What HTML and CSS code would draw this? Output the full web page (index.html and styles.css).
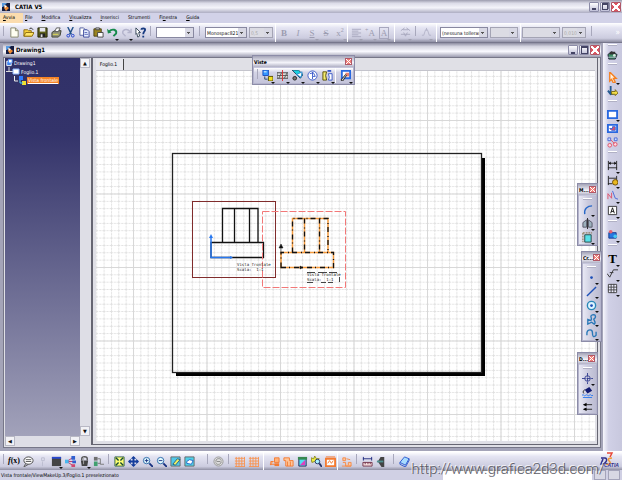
FILE: index.html
```html
<!DOCTYPE html>
<html lang="it">
<head>
<meta charset="utf-8">
<title>CATIA V5</title>
<link rel="stylesheet" href="styles.css">
</head>
<body>
<svg class="defs" aria-hidden="true">
  <symbol id="logo" viewBox="0 0 8 8"><path fill="#141c40" d="M0 0h8v8H0z"/><path fill="#5a9be0" d="M0 0h5L1 4H0z"/><path fill="#f08a30" d="M3 2l4 3-3 3-2-3z"/><path fill="#fff" d="M2 2l3 1-2 2z"/></symbol>
  <symbol id="grid" viewBox="0 0 12 12"><path stroke="#f79452" fill="none" d="M1 2.500h11M1 5.500h11M1 8.500h11M1 11.500h11M2.500 1v11M5.500 1v11M8.500 1v11M11.500 1v11"/></symbol>
</svg>

<header class="titlebar">
  <svg class="logo"><use href="#logo"/></svg>
  <h1>CATIA V5</h1>
  <div class="winbtns">
    <button class="min" aria-label="Riduci"></button><button class="restore" aria-label="Ripristina"></button><button class="close" aria-label="Chiudi"></button>
  </div>
</header>

<nav class="menubar">
  <a class="on" href="#"><u>A</u>vvia</a><a href="#"><u>F</u>ile</a><a href="#"><u>M</u>odifica</a><a href="#"><u>V</u>isualizza</a><a href="#"><u>I</u>nserisci</a><a href="#">Strumenti</a><a href="#">Fi<u>n</u>estra</a><a href="#"><u>G</u>uida</a>
</nav>

<div class="toolbar top">
  <i class="sep"></i>
  <button aria-label="Nuovo"><svg viewBox="0 0 12 12"><path d="M2 1h5l3 3v7H2z" fill="#fffff2" stroke="#85856a"/><path d="M7 1v3h3" fill="none" stroke="#85856a"/></svg></button>
  <button aria-label="Apri"><svg viewBox="0 0 12 12"><path d="M1 3h4l1 1h3v6H1z" fill="#f8d23c" stroke="#8a6a10"/><path d="M3 6h9l-2 4H1z" fill="#ffe566" stroke="#8a6a10"/><path d="M7 2l2-1 2 2" fill="none" stroke="#222"/></svg></button>
  <button aria-label="Salva"><svg viewBox="0 0 12 12"><path d="M1 1h10v10H1z" fill="#5e621c" stroke="#22240a"/><path d="M3 1h6v4H3z" fill="#e6e6f0"/><path d="M3 7h6v4H3z" fill="#222"/><path d="M4 8h2v3H4z" fill="#ddd"/></svg></button>
  <button aria-label="Stampa"><svg viewBox="0 0 12 12"><path d="M1 6l3-2h7l-1 5-2 2H1z" fill="#8f9178" stroke="#3c4030"/><path d="M4 5l2-4h4L8 5z" fill="#fff" stroke="#555"/><path d="M2 8h6" stroke="#e8df50"/></svg></button>
  <button aria-label="Taglia"><svg viewBox="0 0 12 12"><path d="M3 0l4 8M9 0L5 8" stroke="#205088" stroke-width="1.500"/><circle cx="3.500" cy="9.500" r="1.500" fill="none" stroke="#1d3fd0"/><circle cx="8.500" cy="9.500" r="1.500" fill="none" stroke="#1d3fd0"/></svg></button>
  <button aria-label="Copia"><svg viewBox="0 0 12 12"><path d="M1 1h4l2 2v6H1z" fill="#fff" stroke="#5560a0"/><path d="M5 3h4l2 2v6H5z" fill="#e8efff" stroke="#3a479a"/><path d="M6 6h3M6 8h4" stroke="#5a6ab8"/></svg></button>
  <button aria-label="Incolla"><svg viewBox="0 0 12 12"><path d="M1 2h8v8H1z" fill="#9a8420" stroke="#4d4210"/><path d="M3 1h4v2H3z" fill="#ddd" stroke="#444"/><path d="M5 6h6v5H5z" fill="#fff" stroke="#444"/></svg></button>
  <button class="drop" aria-label="Annulla"><svg viewBox="0 0 12 12"><path d="M2 5c4-4 9-2 8 2l-3 3" fill="none" stroke="#178a4c" stroke-width="2"/><path d="M0 2l1 5 4-1z" fill="#178a4c"/></svg></button>
  <button class="drop" aria-label="Ripeti"><svg viewBox="0 0 12 12"><path d="M10 5C6 1 1 3 2 7l3 3M11 2v4H7" fill="none" stroke="#b4b4cc" stroke-width="1.500"/></svg></button>
  <button aria-label="Guida rapida"><svg viewBox="0 0 12 12"><path d="M1 1l5 5H4l1 4-2 1-1-4-1 1z" fill="#fff" stroke="#345"/><path d="M7 3c0-2 4-2 4 0S9 5 9 8M9 9.500v2" fill="none" stroke="#173a80" stroke-width="2"/></svg></button>
  <i class="sep"></i>
  <select class="w38" aria-label="Stile"><option></option></select>
  <i class="sep"></i>
  <select class="w42" aria-label="Carattere"><option>Monospac821</option></select>
  <select class="w24" aria-label="Dimensione" disabled><option>0,5</option></select>
  <i class="line"></i>
  <button class="glyph" disabled><b>B</b></button>
  <button class="glyph" disabled><em>I</em></button>
  <button class="glyph drop" disabled><u>S</u></button>
  <button class="glyph" disabled><s>S</s></button>
  <button class="glyph drop" disabled>x<sup>2</sup></button>
  <i class="line"></i>
  <button class="drop" aria-label="Allinea" disabled><svg viewBox="0 0 12 12"><path d="M1 2.500h10M1 4.500h7M1 6.500h10M1 8.500h7M1 10.500h10" stroke="#a8a8be"/></svg></button>
  <button class="glyph drop" disabled><sup>+</sup>A</button>
  <button class="glyph drop" disabled><span class="box">A</span></button>
  <i class="line gap"></i>
  <button class="drop" aria-label="Simboli" disabled><svg viewBox="0 0 12 12"><path d="M1 4l4-3M7 1l4 3M1 8h10M4 6l2 4 2-4M3 3h6" fill="none" stroke="#a8a8be"/></svg></button>
  <i class="sep"></i>
  <button class="drop" aria-label="Inserisci simbolo" disabled><svg viewBox="0 0 12 12"><path d="M1 9h2l2-6h2l2 6h2M6 1v3" fill="none" stroke="#b4b4c8"/></svg></button>
  <i class="line gap"></i>
  <select class="w48" aria-label="Tolleranza"><option>(nessuna tolleranza)</option></select>
  <select class="w28" aria-label="Valore" disabled><option></option></select>
  <i class="line"></i>
  <select class="w38" aria-label="Formato" disabled><option></option></select>
  <select class="w24" aria-label="Precisione" disabled><option>0,010</option></select>
  <i class="sep"></i>
  <span class="more">»</span>
</div>

<main class="work">
  <section class="doc">
    <header class="doctitle">
      <svg class="logo"><use href="#logo"/></svg>
      <h2>Drawing1</h2>
      <div class="winbtns">
        <button class="min" aria-label="Riduci"></button><button class="max" aria-label="Ingrandisci"></button><button class="close" aria-label="Chiudi"></button>
      </div>
    </header>
    <div class="panes">
      <aside class="treepane">
        <div class="treerow">
          <ul class="tree">
            <li><svg viewBox="0 0 9 9"><path d="M2 3h5v5H2z" fill="#3c82f0" stroke="#fff"/><path d="M4 1h4v4H4z" fill="#fff" stroke="#4a90ff"/></svg>Drawing1</li>
            <li class="l1"><svg viewBox="0 0 14 9"><path d="M3 0v5M0 4.500h7" stroke="#ddd"/><path d="M7 2h6v5H7z" fill="#fff" stroke="#8fb6ff"/></svg>Foglio.1</li>
            <li class="l2"><svg viewBox="0 0 12 9"><path d="M.5 0v5H4" fill="none" stroke="#eee"/><path d="M5 0h4v4H5z" fill="#2f7cff"/><path d="M8 5h4v4H8z" fill="#f0e030"/><path d="M6 4v3h3" fill="none" stroke="#4ad0ff"/></svg><mark>Vista frontale</mark></li>
          </ul>
          <div class="vbar"><span>▲</span><span>▼</span></div>
        </div>
        <div class="hbar"><span>◀</span><span>▶</span></div>
      </aside>
      <section class="sheetpane">
        <div class="tabs"><button>Foglio.1</button></div>
        <svg class="canvas" role="img" aria-label="Foglio di disegno">
          <defs>
            <pattern id="minor" x="37" y="49" width="7.350" height="7.350" patternUnits="userSpaceOnUse"><path d="M.5 0v7.350M0 .5h7.350" stroke="#e0e0e0" stroke-dasharray="2 1"/></pattern>
            <pattern id="major" x="37" y="49" width="73.500" height="73.500" patternUnits="userSpaceOnUse"><path d="M.5 0v73.500M0 .5h73.500" stroke="#d8d8d8"/></pattern>
          </defs>
          <rect width="100%" height="100%" fill="#fff"/>
          <rect width="100%" height="100%" fill="url(#minor)"/>
          <rect width="100%" height="100%" fill="url(#major)"/>
          <path d="M385 87h4v218H80v-4h305z"/>
          <rect x="76.500" y="82.500" width="309" height="219" fill="none" stroke="#222" stroke-width="1.300"/>
          <g transform="translate(-96 -71)" fill="none">
            <rect x="192.500" y="201.500" width="83" height="76" stroke="#e04848"/>
            <rect x="192.500" y="201.500" width="83" height="76" stroke="#201010" stroke-dasharray="1 1"/>
            <g stroke="#111" stroke-width="1.300"><path d="M222.500 242.500V208.500H258v34M234.500 208.500v34M249.500 208.500v34M211 257.500v-15h52.500v15z"/></g>
            <path d="M211 236v21.500h21" stroke="#2878f0" stroke-width="1.500"/>
            <path d="M211 234l2 4h-4zM233 257.500l-3-1.500v3z" fill="#2878f0"/>
            <rect x="262.500" y="211.500" width="83" height="76" stroke="#f27878" stroke-dasharray="7 2"/>
            <g transform="translate(70 10)">
              <path stroke="#f59a3c" stroke-width="1.500" d="M222.500 242.500V208.500H258v34M234.500 208.500v34M249.500 208.500v34M211 257.500v-15h52.500v15z"/>
              <path stroke="#111" stroke-width="1.300" stroke-dasharray="5 4 1 3" d="M222.500 242.500V208.500H258v34M234.500 208.500v34M249.500 208.500v34M211 257.500v-15h52.500v15z"/>
              <path d="M211 234l2 4h-4zM233 257.500l-3-1.500v3zM211 236v7" fill="#111" stroke="#111" stroke-width=".500"/>
            </g>
            <path d="M307 272.500h8m3 0h9m2 0h8M307 282.500h6m8 0h5m2 0h5M339.500 277v5" stroke="#444"/>
            <g class="label" fill="#222"><text x="237" y="266">Vista frontale</text><text x="237" y="271" xml:space="preserve">Scala:  1:1</text><text x="307" y="276">Vista frontale</text><text x="307" y="281" xml:space="preserve">Scala:  1:1</text></g>
          </g>
        </svg>
      </section>
    </div>
  </section>

  <div class="side">
    <i></i>
    <button aria-label="Ambiente"><svg viewBox="0 0 12 12"><path d="M1 6l4-3 6 3-2 5H2z" fill="#3f8f68" stroke="#223"/><path d="M3 3h6v3H3z" fill="#333"/><circle cx="8" cy="7" r="1.500" fill="#d8e8e0"/><path d="M1 9h9" stroke="#b0b8c8"/></svg></button>
    <i></i>
    <button class="drop" aria-label="Seleziona"><svg viewBox="0 0 12 12"><path d="M3 0l7 7H7l2 4-2 1-2-4-2 2z" fill="#fff3e0" stroke="#f58020" stroke-width="1.500"/></svg></button>
    <button aria-label="Orienta"><svg viewBox="0 0 12 12"><path d="M4 0v9M1 5l3 4 4-1" fill="none" stroke="#245a90" stroke-width="2"/><path d="M5 6h4V4l3 3.500-3 3V9H5z" fill="#f4e04a" stroke="#776510"/></svg></button>
    <i></i>
    <button class="drop" aria-label="Nuovo foglio"><svg viewBox="0 0 12 12"><path d="M1 2h10v8H1z" fill="#fff" stroke="#2868e0" stroke-width="2"/></svg></button>
    <button aria-label="Dettaglio"><svg viewBox="0 0 12 12"><path d="M1 2h10v8H1z" fill="#fff" stroke="#2868e0" stroke-width="2"/><path d="M3 6h3V4h3v4H5z" fill="#e05068" stroke="#4060d0"/></svg></button>
    <button aria-label="Istanza"><svg viewBox="0 0 12 12"><g fill="#cfe0ff" stroke="#4868d8"><path d="M1 1h3v3H1zM8 1h3v3H8z"/></g><g fill="#ffd8dd" stroke="#e05068"><circle cx="3" cy="9" r="2"/><circle cx="9" cy="8" r="2"/><path d="M4 3l4 4"/></g></svg></button>
    <i></i>
    <div class="annot">
      <button class="drop" aria-label="Quote"><svg viewBox="0 0 12 12"><path d="M1.500 1v10M10.500 1v10M2 3.500h8M1 8.500h10" fill="none" stroke="#222"/><path d="M2 3.500l2-2v4zM10 3.500l-2-2v4z"/></svg></button>
      <button class="drop" aria-label="Quote concatenate"><svg viewBox="0 0 12 12"><path d="M1.500 1v10M10.500 1v6M2 3.500h8M1 9.500h5" fill="none" stroke="#222"/><circle cx="9" cy="8" r="3" fill="#e8b820" stroke="#6d4c00"/></svg></button>
      <button class="drop" aria-label="Tolleranze"><svg viewBox="0 0 12 12"><path d="M1 10V4l4 5V3" fill="none" stroke="#e05068"/><path d="M6 1l3 8 3 1" fill="none" stroke="#4868d8"/></svg></button>
      <button class="drop" aria-label="Riferimento"><svg viewBox="0 0 12 12"><path d="M1.500 1.500h9v9h-9z" fill="#fff" stroke="#333"/><path d="M4 9l2-6 2 6M4.500 7h3" fill="none" stroke="#111"/></svg></button>
      <i></i>
      <button class="drop" aria-label="Disegno"><svg viewBox="0 0 12 12"><path d="M2 4h8v6H2z" fill="#2878e0" stroke="#173c90"/><circle cx="4" cy="3" r="2" fill="#e86070"/><circle cx="9" cy="8" r="2" fill="#48c8f0"/></svg></button>
      <i></i>
      <button class="drop letter">T</button>
      <button class="drop" aria-label="Rugosità"><svg viewBox="0 0 12 12"><path d="M0 6l3 4 4-8h5M3 5h4" fill="none" stroke="#333"/></svg></button>
      <button class="drop" aria-label="Tabella"><svg viewBox="0 0 12 12"><path d="M1.500 1.500h9v9h-9zM4.500 1v10M7.500 1v10M1 4.500h10M1 7.500h10" fill="#eef" stroke="#444"/></svg></button>
    </div>
  </div>
</main>

<div class="toolbar bottom">
  <i class="sep"></i>
  <button class="fx"><span><em>f</em>(x)</span></button>
  <button aria-label="Commento"><svg viewBox="0 0 12 12"><ellipse cx="6" cy="5" rx="5" ry="4" fill="#fff" stroke="#444"/><path d="M3 8l-2 4 5-3M3 4h6M3 6h6" fill="none" stroke="#555"/></svg></button>
  <button aria-label="Verifica" disabled><svg viewBox="0 0 12 12"><path d="M5 2h3v3H5zM6 6v5" fill="none" stroke="#bbbccf"/></svg></button>
  <button class="drop" aria-label="Tabella"><svg viewBox="0 0 12 12"><path d="M1 1h10v10H1z" fill="#444"/><path d="M1 1h10v2H1z" fill="#2848d0"/></svg></button>
  <button aria-label="Relazioni"><svg viewBox="0 0 12 12"><path d="M2 6l6-4M2 6l6 4M2 6h8" stroke="#c03060"/><path d="M0 4h4v4H0z" fill="#48b8f0"/><path d="M7 0h4v4H7zM8 5h4v3H8z" fill="#3060d0"/><path d="M7 9h4v3H7z" fill="#d04870"/></svg></button>
  <button class="drop" aria-label="Blocca"><svg viewBox="0 0 12 12"><path d="M3 5V3c0-3 6-3 6 0v2" fill="none" stroke="#555" stroke-width="1.500"/><path d="M2 5h8l-1 6H3z" fill="#444"/><path d="M5 1v8" stroke="#aaa"/></svg></button>
  <button aria-label="Configura"><svg viewBox="0 0 12 12"><path d="M1 1h4v4H1z" fill="#707070"/><path d="M1 6h4v5H1z" fill="#40a070"/><path d="M5 3h3v6h4M5 8h3" fill="none" stroke="#777"/></svg></button>
  <i class="sep"></i>
  <button aria-label="Adatta"><svg viewBox="0 0 12 12"><path d="M1 1h10v10H1z" fill="#ffff70" stroke="#2f6048"/><path d="M2 2l3 3M10 2L7 5M2 10l3-3M10 10L7 7" stroke="#164a38" stroke-width="1.500"/></svg></button>
  <button aria-label="Sposta"><svg viewBox="0 0 12 12"><path d="M6 1v10M1 6h10" stroke="#153e9c" stroke-width="2"/><path d="M6 0l3 3H3zM6 12L3 9h6zM0 6l3-3v6zM12 6L9 3v6z" fill="#153e9c"/></svg></button>
  <button aria-label="Ingrandisci"><svg viewBox="0 0 12 12"><circle cx="5" cy="5" r="3.500" fill="#e4fbff" stroke="#2868a8"/><path d="M8 8l4 4" stroke="#173080" stroke-width="2"/><path d="M3 5h4M5 3v4" stroke="#173080"/></svg></button>
  <button aria-label="Riduci"><svg viewBox="0 0 12 12"><circle cx="5" cy="5" r="3.500" fill="#e4fbff" stroke="#2868a8"/><path d="M8 8l4 4" stroke="#173080" stroke-width="2"/><path d="M3 5h4" stroke="#173080"/></svg></button>
  <button aria-label="Vista normale"><svg viewBox="0 0 12 12"><path d="M1 1h10v10H1z" fill="#50c8e8" stroke="#666"/><path d="M3 9l5-6 3 1-5 6z" fill="#f0ee60" stroke="#1e608a"/></svg></button>
  <button aria-label="Vista multipla"><svg viewBox="0 0 12 12"><path d="M1 1h10v10H1z" fill="#50d0e8" stroke="#666"/><path d="M3 6l3-2 4 1-2 4-5-1z" fill="#fff" stroke="#2468c8"/></svg></button>
  <i class="sep wide"></i>
  <button aria-label="Aggiorna" disabled><svg viewBox="0 0 12 12"><circle cx="6" cy="6" r="5" fill="#ddd" stroke="#999"/><path d="M3 6c0-4 6-4 6-1M9 6c0 4-6 4-6 1M4 6h4" fill="none" stroke="#888"/></svg></button>
  <i class="sep"></i>
  <button aria-label="Griglia"><svg><use href="#grid"/></svg></button>
  <button aria-label="Aggancia al punto"><svg><use href="#grid"/></svg></button>
  <i class="line gap"></i>
  <button aria-label="Analisi"><svg viewBox="0 0 12 12"><path d="M1 9h10M2 10V6h3M6 2h5v5H6z" fill="#ffb27a" stroke="#f47a30"/><path d="M6 8h5v3H6z" fill="#f47a30"/></svg></button>
  <button aria-label="Vincoli"><svg viewBox="0 0 12 12"><path d="M1 2h6v3h4v6H3V5H1zM5 6v5M8 6v5" fill="#ffc79c" stroke="#f47a30"/></svg></button>
  <button aria-label="Colori"><svg viewBox="0 0 12 12"><path d="M2 2h8v9H2z" fill="#50e0f0" stroke="#225"/><path d="M3 10l6-6v6z" fill="#e040c0"/><path d="M1 1h10v3H1z" fill="#388850"/></svg></button>
  <button aria-label="Filtro"><svg viewBox="0 0 12 12"><path d="M0 2l3 1 1-3 2 3 3 0-3 2 0 3-2-2-3 1z" fill="#f4f040" stroke="#888820"/><circle cx="7" cy="6" r="2.500" fill="#a8f0ff" stroke="#236"/><path d="M9 8l3 4" stroke="#236" stroke-width="2"/></svg></button>
  <button aria-label="Cornice"><svg viewBox="0 0 12 12"><path d="M1 3h10v8H1z" fill="#fff" stroke="#f47a30" stroke-width="2"/><path d="M3 8l2-3 2 3 2-3M1 1h10" fill="none" stroke="#f47a30"/></svg></button>
  <i class="line"></i>
  <button aria-label="Geometria"><svg viewBox="0 0 12 12"><path d="M2 2h3v3H2zM6 3l4 1M2 7h3v4h6V7H8v3M1 11h10" fill="#ffc79c" stroke="#f48a48"/></svg></button>
  <i class="sep"></i>
  <button aria-label="Misura"><svg viewBox="0 0 12 12"><path d="M1.500 1v4M10.500 1v4M1 3h10" stroke="#222c80"/><path d="M1 7h10v4H1z" fill="#f6dede" stroke="#703048"/><path d="M3.500 7v2M6.500 7v2M9 7v2" stroke="#703048"/></svg></button>
  <button aria-label="Misura elemento"><svg viewBox="0 0 12 12"><path d="M2 6l3-5h4v11H6z" fill="#444"/><path d="M1 6h7" stroke="#509090" stroke-width="2"/></svg></button>
  <i class="sep gapped"></i>
  <button aria-label="Catalogo"><svg viewBox="0 0 12 12"><path d="M1 7l5-6 5 2-4 7z" fill="#a8dcff" stroke="#2858d0"/><path d="M1 7v2l6 3 4-7V3" fill="none" stroke="#2858d0"/></svg></button>
  <svg class="ds" viewBox="0 0 22 16" aria-label="CATIA"><path d="M8 1h5l-2 4" fill="none" stroke="#e84838" stroke-width="1.500"/><path d="M2 6h4c3 0 2 6-4 6l2-5" fill="none" stroke="#30308c" stroke-width="1.500"/><path d="M13 6c-6 0-3 3-2 4s-1 3-4 2" fill="none" stroke="#f09838" stroke-width="1.500"/><text x="5" y="15">CATIA</text></svg>
</div>

<footer class="status">
  <span>Vista frontale/ViewMakeUp.3/Foglio.1 preselezionato</span>
  <input type="text" aria-label="Comando">
  <button aria-label="Esegui"></button><button aria-label="Finestra comandi"></button>
</footer>

<section class="palette viste">
  <header><h3>Viste</h3><button class="close" aria-label="Chiudi"></button></header>
  <div class="tools">
    <i class="sep"></i>
    <button class="drop" aria-label="Vista frontale"><svg viewBox="0 0 12 12"><path d="M1 0h6v6H1z" fill="#3498ff" stroke="#174bc0"/><path d="M2 2h3" stroke="#fff"/><path d="M7 7h5v5H7z" fill="#f0e020" stroke="#554c00"/><path d="M3 7v3h3" fill="none" stroke="#246"/></svg></button>
    <button class="drop" aria-label="Sezione"><svg viewBox="0 0 12 12"><path d="M0 3h12v6H0z" fill="#ddd" stroke="#444"/><path d="M2 9l3-6M8 9l3-6M0 6h12" stroke="#555"/><path d="M6 0v12" stroke="#e03030"/></svg></button>
    <button class="drop" aria-label="Dettaglio"><svg viewBox="0 0 12 12"><path d="M0 0h7l5 5-3 4-4-4z" fill="#18d0e0" stroke="#246"/><path d="M5 5l6-3-1 6z" fill="#fff" stroke="#28c"/><circle cx="3" cy="9" r="2" fill="#777" stroke="#222"/></svg></button>
    <button class="drop" aria-label="Ritaglio"><svg viewBox="0 0 12 12"><circle cx="6" cy="6" r="5" fill="#fff" stroke="#3858c8"/><path d="M3 4l4-1 2 4H6v3M6 2v5" fill="none" stroke="#3858c8"/></svg></button>
    <button class="drop" aria-label="Interruzione"><svg viewBox="0 0 12 12"><path d="M1 2h4l-1 4 1 5H1z" fill="#f4ec70" stroke="#554c00"/><path d="M7 4h4v7H7l1-3z" fill="#fff" stroke="#3858c8"/><path d="M6 1h4" stroke="#3858c8" stroke-width="2"/></svg></button>
    <i class="line"></i>
    <button class="drop" aria-label="Assistente"><svg viewBox="0 0 12 12"><path d="M2 1h9v8H2z" fill="#fff" stroke="#2868e0" stroke-width="2"/><path d="M6 3h4v4H6z" fill="#e88070"/><path d="M1 11l5-6 1 1-4 6z" fill="#ccc" stroke="#222"/></svg></button>
  </div>
</section>

<section class="palette tall modifica">
  <header><h3>M...</h3><button class="close" aria-label="Chiudi"></button></header>
  <div class="tools">
    <i class="hsep"></i>
    <button class="drop" aria-label="Raccordo"><svg viewBox="0 0 12 12"><path d="M3 11C2 5 6 2 11 2" fill="none" stroke="#2868c8" stroke-width="1.500"/></svg></button>
    <button class="drop" aria-label="Simmetria"><svg viewBox="0 0 12 12"><path d="M6 0v12" stroke="#222"/><path d="M5 2L1 5v5h4zM7 2l4 3v5H7z" fill="#9cb0bc" stroke="#556"/></svg></button>
    <button class="drop" aria-label="Vincolo"><svg viewBox="0 0 12 12"><path d="M3 3h7v8H3z" fill="#58e0e8" stroke="#244"/><path d="M1 1h10M1 1v10" stroke="#7a6030" stroke-dasharray="2 1"/></svg></button>
  </div>
</section>

<section class="palette tall crea">
  <header><h3>Cr...</h3><button class="close" aria-label="Chiudi"></button></header>
  <div class="tools">
    <i class="hsep"></i>
    <button class="drop" aria-label="Punto"><svg viewBox="0 0 12 12"><circle cx="6" cy="6" r="1.500" fill="#1d50b8"/></svg></button>
    <button class="drop" aria-label="Linea"><svg viewBox="0 0 12 12"><path d="M1 11L11 1" stroke="#1d50b8" stroke-width="1.500"/></svg></button>
    <button class="drop" aria-label="Cerchio"><svg viewBox="0 0 12 12"><circle cx="6" cy="6" r="4.500" fill="#dff4ff" stroke="#2a88b8" stroke-width="1.500"/><circle cx="6" cy="6" r="1.500" fill="#1d50b8"/></svg></button>
    <button class="drop" aria-label="Profilo"><svg viewBox="0 0 12 12"><path d="M2 11V6l3 1c3-1-2-5 2-6s4 3 2 4 3 4 0 6L6 9z" fill="none" stroke="#2a78b8" stroke-width="1.500"/></svg></button>
    <button class="drop" aria-label="Curva"><svg viewBox="0 0 12 12"><path d="M1 8V5c1-4 6-4 6 0s1 6 4 3V4" fill="none" stroke="#2a78b8" stroke-width="1.500"/></svg></button>
  </div>
</section>

<section class="palette tall decora">
  <header><h3>D...</h3><button class="close" aria-label="Chiudi"></button></header>
  <div class="tools">
    <i class="hsep"></i>
    <button class="drop" aria-label="Asse"><svg viewBox="0 0 12 12"><circle cx="6" cy="6" r="3" fill="none" stroke="#333e90"/><path d="M6 0v12M0 6h12" stroke="#333e90" stroke-dasharray="4 1"/></svg></button>
    <button aria-label="Riempimento"><svg viewBox="0 0 12 12"><path d="M3 3l5-3 3 4-5 3z" fill="#111a70"/><path d="M3 3c-2 1-2 3-1 4" fill="none" stroke="#111"/><path d="M0 9c2-2 2 2 4 0s2 2 4 0 2 2 4 0M1 11.500h10" fill="none" stroke="#2878f0"/></svg></button>
    <button aria-label="Freccia"><svg viewBox="0 0 12 12"><path d="M2 4h9M2 9h9" stroke="#222"/><path d="M1 4l4-2v4zM1 9l4-2v4z"/></svg></button>
  </div>
</section>

<div class="watermark">http://www.grafica2d3d.com/</div>
</body>
</html>
```

FILE: styles.css
```css
* { box-sizing: border-box; }
html, body { height: 100%; }
body {
  margin: 0;
  display: flex;
  flex-direction: column;
  position: relative;
  overflow: hidden;
  background: #cfcfe4;
  color: #000;
  font: 5px/8px "DejaVu Sans Condensed", "DejaVu Sans", sans-serif;
}
h1, h2, h3 { margin: 0; font-weight: bold; font-size: 6px; line-height: 10px; }
button {
  padding: 0;
  border: 0;
  background: none;
  font: inherit;
  color: inherit;
  display: grid;
  place-items: center;
  flex: none;
}
svg { display: block; flex: none; }
.defs { position: absolute; width: 0; height: 0; }
.logo { width: 8px; height: 8px; }

/* Window frames */
.titlebar, .doctitle {
  display: flex;
  align-items: center;
  flex: none;
}
.titlebar {
  height: 13px;
  gap: 5px;
  padding: 0 1px 0 2px;
  background: linear-gradient(#9c9cae, #dcdce8 25%, #f4f4fa 60%, #b4b4c8 95%);
}
.doctitle {
  height: 14px;
  gap: 2px;
  padding: 0 1px 0 3px;
  background: linear-gradient(#8c8ca0, #d4d4e0 25%, #fafaff 60%, #9c9cb0);
}
.winbtns { display: flex; gap: 1px; margin-left: auto; }
.winbtns button {
  position: relative;
  width: 10px;
  height: 10px;
  border: 1px solid #8c8ca8;
  border-radius: 1px;
  background: linear-gradient(#fff, #c0c0d8);
}
.winbtns .min::after, .winbtns .max::after, .winbtns .restore::after {
  content: "";
  width: 5px;
  height: 5px;
  border: solid #444464;
  border-width: 2px 1px 1px;
}
.winbtns .min::after { border-width: 0 0 2px; width: 4px; }
.winbtns .restore::after { width: 4px; height: 4px; box-shadow: 1px -1px #777792; }
.winbtns .close, .palette .close {
  border: 1px solid #b05868;
  background: linear-gradient(45deg, transparent 43%, #fff 43% 57%, transparent 57%), linear-gradient(-45deg, transparent 43%, #fff 43% 57%, transparent 57%), #dc5560;
}

/* Menus */
.menubar {
  display: flex;
  flex: none;
  gap: 9px;
  height: 10px;
  background: #d2d2e8;
  line-height: 9px;
}
.menubar a { color: inherit; text-decoration: none; }
.menubar a.on { background: #fbdcae; width: 23px; padding-left: 3px; margin-right: -7px; }

/* Toolbars */
.toolbar {
  display: flex;
  align-items: center;
  flex: none;
  background: linear-gradient(#fff, #e4e4f2 25%, #ccccdf 80%, #9090a4);
}
.toolbar.top { height: 19px; }
.toolbar.bottom { height: 19px; border-top: 1px solid #fff; }
.toolbar button { width: 14px; height: 14px; }
.toolbar svg, .tools svg, .side svg { width: 11px; height: 11px; }
.drop { position: relative; }
.drop::after {
  content: "";
  position: absolute;
  right: 0;
  bottom: -1px;
  border: 2px solid transparent;
  border-top-color: #111;
  border-bottom: 0;
}
.drop:disabled::after { border-top-color: #a0a0b0; }
.sep {
  width: 4px;
  height: 10px;
  margin: 0 3px 4px 0;
  border-right: 1px solid #a8a8bc;
  flex: none;
}
.bottom .wide { margin-left: 8px; }
.bottom .gapped { margin-left: 2px; }
.line {
  align-self: stretch;
  width: 1px;
  margin-right: 1px;
  background: #fff;
  flex: none;
}
.toolbar .gap { margin: 0 3px; }
.glyph { font: 9px/10px "Liberation Serif", serif; color: #9c9cb0; }
.toolbar .glyph { display: block; text-align: center; }
.glyph sup { font-size: 6px; line-height: 0; }
.box { border: 1px solid #a8a8be; padding: 0 1px; }
.fx { font: bold 8px/10px "Liberation Serif", serif; white-space: nowrap; }
.toolbar select {
  appearance: none;
  height: 11px;
  margin: 0 2px 0 0;
  padding: 0 8px 0 1px;
  border: 1px solid #8888a0;
  border-radius: 0;
  color: #111;
  font: inherit;
  background:
    linear-gradient(#555, #555) right 3px center / 3px 1px no-repeat,
    linear-gradient(#555, #555) right 4px top 5px / 1px 1px no-repeat,
    linear-gradient(#d8d8e4, #d8d8e4) right / 8px 100% no-repeat,
    #fff;
}
.toolbar .sep + select { margin-left: 2px; }
.toolbar select:disabled { opacity: 1; color: #aaa; background-color: #dcdce4; border-color: #a4a4b4; }
.w24 { width: 24px; }
.w28 { width: 28px; }
.w38 { width: 38px; }
.w42 { width: 42px; }
.w48 { width: 48px; }
.more { margin-left: auto; padding-right: 2px; color: #fff; font-size: 8px; }

/* Work area */
.work { flex: 1; display: flex; min-height: 0; border-top: 1px solid #77778c; background: #c4c4da; }
.doc {
  flex: 1;
  min-width: 0;
  display: flex;
  flex-direction: column;
  border: solid #a4a4b8;
  border-width: 0 2px 3px 3px;
}
.panes { flex: 1; display: flex; min-height: 0; border: 1px solid #777788; background: #e0e0e6; }
.treepane { width: 86px; display: flex; flex-direction: column; flex: none; padding: 0 0 1px 1px; }
.treerow { flex: 1; display: flex; min-height: 0; }
.tree {
  flex: 1;
  margin: 0;
  padding: 0;
  list-style: none;
  background: linear-gradient(#313168, #33336a 20%, #a2a2ba);
  color: #fff;
}
.tree li { display: flex; align-items: center; height: 9px; gap: 1px; white-space: nowrap; }
.tree svg { width: 8px; height: 9px; }
.tree .l1 { padding-left: 1px; }
.tree .l1 svg { width: 14px; }
.tree .l2 { padding-left: 9px; }
.tree .l2 svg { width: 12px; }
.tree mark { background: #f58426; color: #fff; text-decoration: underline; line-height: 7px; padding: 0 1px; }
.vbar, .hbar { display: flex; justify-content: space-between; background: #dedee6; color: #111; font: 5px/10px "DejaVu Sans", sans-serif; }
.vbar { flex-direction: column; width: 10px; }
.hbar { height: 10px; flex: none; margin-right: 10px; }
.vbar span, .hbar span { width: 10px; height: 10px; text-align: center; border: 1px solid #b8b8c4; line-height: 8px; background: #f2f2f6; }
.sheetpane {
  flex: 1;
  min-width: 0;
  display: flex;
  flex-direction: column;
  margin: 0 2px 2px 1px;
  padding: 0 2px 3px 3px;
  border: solid #666672;
  border-width: 0 1px 1px 2px;
}
.tabs { height: 13px; flex: none; display: flex; align-items: center; border-bottom: 1px solid #c4c4cc; }
.tabs button { height: 11px; width: 28px; border-right: 1px solid #444; background: #e8e8ee; padding-right: 2px; }
.canvas { flex: 1; width: 100%; min-height: 0; }
.label { font: 4px "DejaVu Sans Mono", monospace; }
.side {
  width: 19px;
  flex: none;
  display: flex;
  flex-direction: column;
  align-items: center;
  background: linear-gradient(90deg, #f6f6fc, #d0d0e6 30%, #c8c8de);
}
.side button { width: 15px; height: 14px; }
.annot { display: flex; flex-direction: column; align-items: center; }
.annot button { height: 15px; }
.side i, .hsep { width: 9px; height: 1px; margin: 2px 0 5px; background: #fff; border-bottom: 1px solid #b0b0c4; box-sizing: content-box; flex: none; }
.side > i:first-child { margin: 1px 0; }
.side .letter { font: bold 13px/14px "Liberation Serif", serif; }

/* Logo and status line */
.toolbar .ds { width: 22px; height: 16px; margin: 0 1px 0 auto; align-self: flex-start; }
.ds text { font: italic bold 5px "Liberation Sans", sans-serif; fill: #30308c; }
.status { display: flex; flex: none; height: 10px; gap: 2px; padding: 0 2px 0 1px; background: #d0d0e4; }
.status span { flex: 1; line-height: 10px; }
.status input { width: 24%; min-width: 0; padding: 0; border: 0; border-top: 1px solid #888; background: #fff; font: inherit; }
.status button { width: 12px; height: 10px; border: 1px solid #a4a4ba; background: #d8d8e4; }

/* Floating palettes */
.palette {
  position: absolute;
  border: 1px solid #8c8ca8;
  background: #c6c6dc;
  box-shadow: inset 0 0 0 1px #b4b4cc;
}
.palette header {
  display: flex;
  align-items: center;
  justify-content: space-between;
  height: 11px;
  padding: 0 2px 0 1px;
  background: linear-gradient(#a4a4b8, #f4f4fa 60%, #b0b0c4);
}
.palette h3 { font-size: 5px; }
.palette .close { width: 7px; height: 7px; background-color: #f08078; }
.tools { display: flex; align-items: center; margin: 1px; background: linear-gradient(#fff, #d4d4e6 30%, #c4c4da); }
.tools button { width: 15px; height: 15px; }
.viste { left: 252px; top: 55px; width: 103px; }
.viste .sep { margin-right: 2px; }
.viste .line { margin: 0 2px 0 0; }
.tall .tools { flex-direction: column; padding: 2px 0 0; background: linear-gradient(90deg, #e8e8f4, #ccccdf 50%, #bcbcd2); }
.tall .tools button { height: 14px; }
.tall .hsep { margin: 0 0 2px; }
.modifica { right: 24px; top: 183px; width: 21px; }
.crea { right: 20px; top: 251px; width: 21px; }
.decora { right: 24px; top: 352px; width: 21px; }

.watermark {
  position: absolute;
  right: 17px;
  bottom: 2px;
  color: #5c5c66;
  font: 300 15px/18px Roboto, sans-serif;
  text-shadow: -1px -1px #f4f4f8;
}
```
